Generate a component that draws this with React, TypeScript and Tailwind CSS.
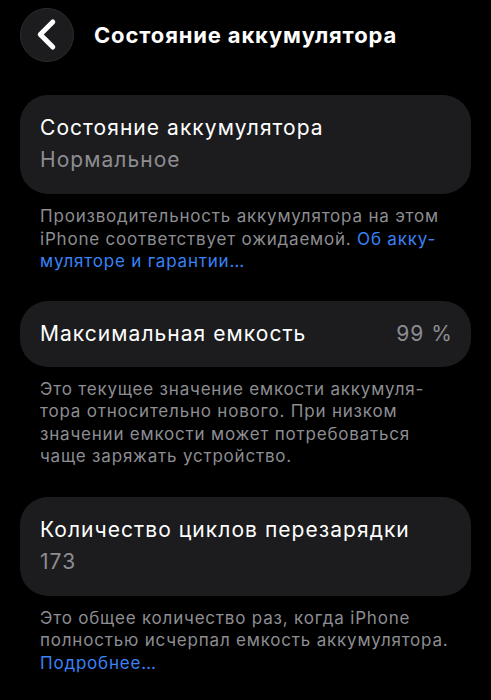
const font = { fontFamily: 'Inter, "Noto Sans", sans-serif' };

function Footer({ children }: { children: React.ReactNode }) {
  return (
    <p className="px-[40px] pt-[11px] text-[17px] leading-[22.5px] text-[#8d8d92] tracking-[0.8px] whitespace-nowrap">
      {children}
    </p>
  );
}

function BackChevron() {
  return (
    <svg width="54" height="54" viewBox="0 0 54 54" fill="none">
      <polyline
        points="33,13.5 20,26.5 33,39.5"
        stroke="white"
        strokeWidth="5.2"
        strokeLinecap="round"
        strokeLinejoin="round"
      />
    </svg>
  );
}

export default function App() {
  return (
    <div className="w-[491px] h-[700px] bg-black text-white overflow-hidden" style={font}>
      <div className="flex items-center h-[70px] px-[20px]">
        <button className="w-[54px] h-[54px] rounded-full bg-[#1c1c1e] border border-[#2c2c2e] flex items-center justify-center">
          <BackChevron />
        </button>
        <h1 className="ml-[20px] text-[22px] font-bold tracking-[0.85px]">Состояние аккумулятора</h1>
      </div>

      <div className="mt-[25px] mx-[20px] rounded-[28px] bg-[#1c1c1e] px-[20px] pt-[18px] pb-[17px]">
        <div className="text-[21px] leading-[30px] tracking-[1.05px]">Состояние аккумулятора</div>
        <div className="text-[21px] leading-[34px] text-[#8d8d92] tracking-[1.05px]">Нормальное</div>
      </div>
      <Footer>
        Производительность аккумулятора на этом
        <br />
        iPhone соответствует ожидаемой. <span className="text-[#3a82f7]">Об акку-</span>
        <br />
        <span className="text-[#3a82f7]">муляторе и гарантии…</span>
      </Footer>

      <div className="mt-[28px] mx-[20px] h-[66px] rounded-[28px] bg-[#1c1c1e] pl-[20px] pr-[18px] flex items-center justify-between">
        <span className="text-[21px] tracking-[1.05px]">Максимальная емкость</span>
        <span className="text-[21px] text-[#8d8d92] tracking-[1.05px]">99 %</span>
      </div>
      <Footer>
        Это текущее значение емкости аккумуля-
        <br />
        тора относительно нового. При низком
        <br />
        значении емкости может потребоваться
        <br />
        чаще заряжать устройство.
      </Footer>

      <div className="mt-[29px] mx-[20px] rounded-[28px] bg-[#1c1c1e] px-[20px] pt-[18px] pb-[17px]">
        <div className="text-[21px] leading-[30px] tracking-[1.05px]">Количество циклов перезарядки</div>
        <div className="text-[21px] leading-[34px] text-[#8d8d92] tracking-[1.05px]">173</div>
      </div>
      <Footer>
        Это общее количество раз, когда iPhone
        <br />
        полностью исчерпал емкость аккумулятора.
        <br />
        <span className="text-[#3a82f7]">Подробнее…</span>
      </Footer>
    </div>
  );
}
